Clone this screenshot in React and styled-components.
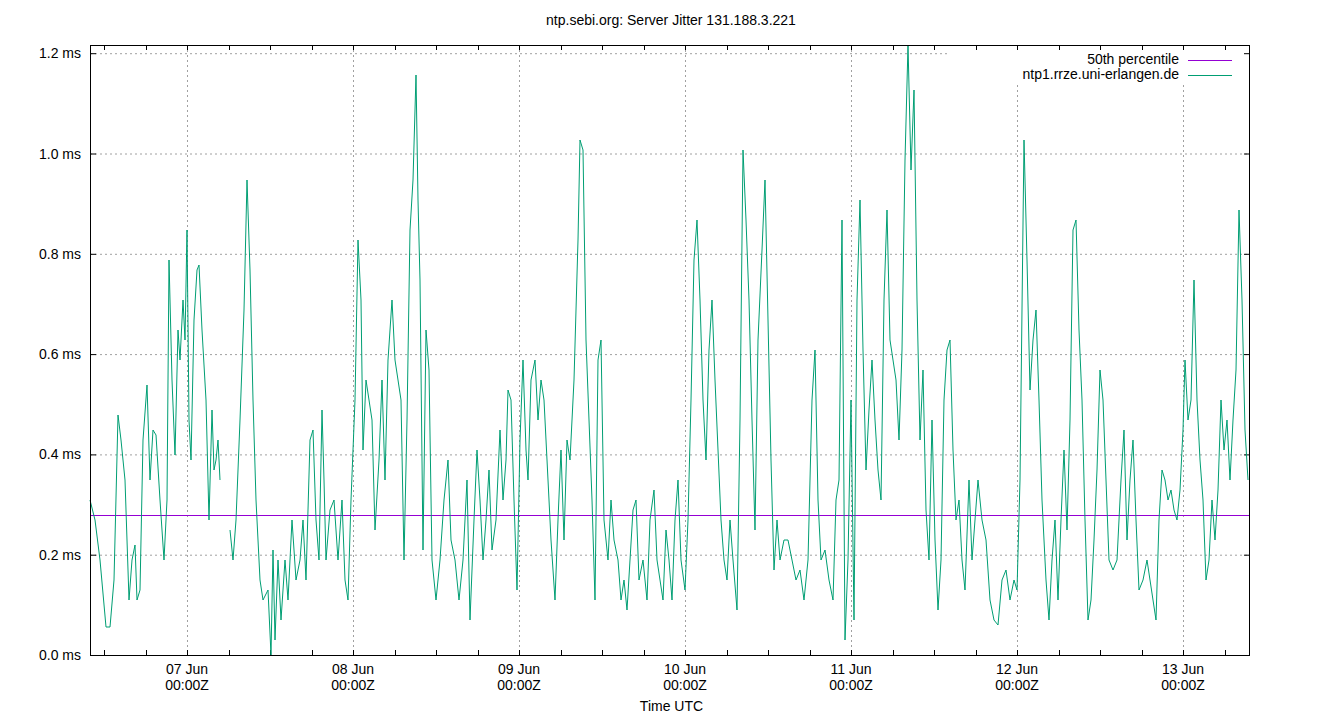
import React from 'react';
import styled, { createGlobalStyle } from 'styled-components';

const GlobalStyle = createGlobalStyle`
  html, body { margin: 0; padding: 0; background: #fff; }
  body { font-family: "Liberation Sans", Arial, sans-serif; }
`;

const Page = styled.div`
  width: 1340px;
  height: 720px;
  display: flex;
  flex-direction: column;
  align-items: center;
  color: #000;
`;

const Title = styled.div`
  height: 30px;
  line-height: 40px;
  font-size: 14px;
  padding-left: 2px;
`;

const Chart = styled.svg`
  display: block;
  font-family: "Liberation Sans", Arial, sans-serif;
  font-size: 14px;
`;

const XLabel = styled.div`
  font-size: 14px;
  line-height: 22px;
  padding-left: 3px;
`;

const L = 90, R = 1250, T = 45, B = 655;
const PX_PER_MS = 501.5;
const yOf = (ms) => B - ms * PX_PER_MS;
const day0 = 187, dayW = 166;

const pts = `90 500 95 520 100 560 106 627 110 627 114 580 118 415 121 440 125 480 129 600 132 560 135 545 137 600 140 590 143 440 147 385 150 480 153 430 156 435 160 500 164 560 167 500 169 260 172 380 175 455 178 330 180 360 183 300 185 340 187 230 189 420 191 460 194 320 197 270 199 265 202 330 206 400 209 520 212 410 214 470 216 460 218 440 220 480 230 530 233 560 236 520 240 420 244 310 247 180 250 270 253 400 256 500 260 580 263 600 268 590 271 655 273 550 275 640 278 560 281 620 285 560 288 600 292 520 296 580 300 560 303 520 306 580 310 440 313 430 316 520 319 560 322 410 324 480 326 560 330 510 334 500 338 560 342 500 345 580 348 600 351 500 355 400 358 240 361 300 363 450 366 380 369 400 372 420 375 530 379 460 382 380 385 480 388 360 392 300 395 360 398 380 401 400 404 560 407 420 410 230 413 180 416 75 418 200 420 280 423 550 426 330 429 370 432 560 436 600 440 560 444 500 448 460 451 540 455 560 459 600 463 560 467 480 470 620 474 520 477 450 480 500 483 560 486 520 489 470 492 550 496 520 500 430 503 500 506 460 508 390 511 400 514 500 517 590 520 440 523 360 526 450 528 480 531 380 535 360 538 420 541 380 544 400 548 480 551 540 555 600 558 520 561 450 564 540 567 440 570 460 574 380 578 240 580 140 583 150 586 340 589 420 592 500 595 600 598 360 601 340 604 520 608 560 611 500 614 540 618 560 621 600 624 580 627 610 630 560 633 510 636 500 639 580 643 560 647 600 650 520 654 490 657 560 660 580 663 600 666 530 669 560 672 600 675 520 678 480 681 560 685 590 688 520 691 400 694 260 697 220 700 300 703 400 706 460 709 350 712 300 715 380 718 450 721 520 724 560 727 580 730 520 733 560 737 610 740 420 743 150 746 220 749 300 752 420 755 530 758 340 762 250 765 180 768 320 771 460 774 570 777 520 780 560 784 540 788 540 792 560 796 580 800 570 804 600 808 560 812 400 815 350 818 500 821 560 825 550 829 580 833 600 836 500 839 480 842 220 845 640 848 560 851 400 854 620 857 300 860 200 863 350 866 470 869 410 872 360 875 420 878 470 881 500 884 300 887 210 890 340 893 360 896 380 899 440 902 350 905 160 908 45 911 170 914 90 917 300 920 440 923 370 926 510 929 560 932 420 935 540 938 610 941 560 944 400 947 350 950 340 953 450 956 520 959 500 962 560 965 590 969 480 972 560 975 520 978 480 982 520 986 540 990 600 994 620 998 625 1002 580 1006 570 1010 600 1014 580 1017 590 1020 480 1024 140 1027 260 1030 390 1033 340 1036 310 1039 400 1042 500 1046 580 1049 620 1052 560 1055 520 1058 600 1061 520 1064 450 1067 530 1070 420 1073 230 1076 220 1079 330 1082 400 1085 520 1088 620 1091 600 1094 540 1097 470 1100 370 1103 400 1106 480 1109 560 1113 570 1117 560 1121 480 1124 430 1127 540 1130 480 1133 440 1136 520 1139 590 1143 580 1147 560 1150 580 1153 600 1156 620 1159 520 1162 470 1165 480 1168 500 1171 490 1174 510 1177 520 1180 490 1183 430 1185 360 1188 420 1191 400 1194 280 1197 400 1200 460 1203 500 1206 580 1209 560 1212 500 1215 540 1218 490 1221 400 1224 450 1227 420 1230 480 1233 420 1236 370 1239 210 1242 300 1245 430 1248 480`
  .split(' ').map(Number);

// split into two segments (gap near x=221..230)
const seg = [[], []];
for (let i = 0; i < pts.length; i += 2) {
  seg[pts[i] <= 220 ? 0 : 1].push(`${pts[i]},${pts[i + 1]}`);
}

const days = ['07', '08', '09', '10', '11', '12', '13'];
const yVals = [0, 0.2, 0.4, 0.6, 0.8, 1.0, 1.2];

export default function App() {
  const minor = [];
  for (let x = day0 - 2 * dayW / 4; x < R; x += dayW / 4) if (x > L) minor.push(x);

  return (
    <Page>
      <GlobalStyle />
      <Title>ntp.sebi.org: Server Jitter 131.188.3.221</Title>
      <Chart width="1340" height="665" viewBox="0 30 1340 665">
        {/* grid */}
        <g stroke="#a0a0a0" strokeWidth="1" strokeDasharray="2,3">
          {yVals.slice(1).map((v) => (
            <line key={v} x1={L} x2={v === 1.2 ? 950 : R} y1={yOf(v) + 0.5} y2={yOf(v) + 0.5} />
          ))}
          {days.map((d, i) => (
            <line key={d} x1={day0 + i * dayW + 0.5} x2={day0 + i * dayW + 0.5} y1={i >= 5 ? 85 : T} y2={B} />
          ))}
        </g>
        {/* ticks */}
        <g stroke="#000" strokeWidth="1">
          {minor.map((x) => (
            <g key={x}>
              <line x1={Math.round(x) + 0.5} x2={Math.round(x) + 0.5} y1={B} y2={B - 5} />
              <line x1={Math.round(x) + 0.5} x2={Math.round(x) + 0.5} y1={T} y2={T + 5} />
            </g>
          ))}
          {yVals.map((v) => (
            <g key={v}>
              <line x1={L} x2={L + 6} y1={yOf(v) + 0.5} y2={yOf(v) + 0.5} />
              <line x1={R - 6} x2={R} y1={yOf(v) + 0.5} y2={yOf(v) + 0.5} />
            </g>
          ))}
        </g>
        {/* labels */}
        {yVals.map((v) => (
          <text key={v} x="81" y={yOf(v) + 5} textAnchor="end">{v.toFixed(1)} ms</text>
        ))}
        {days.map((d, i) => (
          <text key={d} x={day0 + i * dayW} y="674" textAnchor="middle">
            <tspan x={day0 + i * dayW}>{d} Jun</tspan>
            <tspan x={day0 + i * dayW} dy="16">00:00Z</tspan>
          </text>
        ))}
        {/* data */}
        <line x1={L} x2={R} y1="515.5" y2="515.5" stroke="#9400d3" strokeWidth="1" />
        {seg.map((s, i) => (
          <polyline key={i} points={s.join(' ')} fill="none" stroke="#009e73" strokeWidth="1" />
        ))}
        {/* legend */}
        <text x="1179" y="64" textAnchor="end">50th percentile</text>
        <line x1="1188" x2="1232" y1="60.5" y2="60.5" stroke="#9400d3" />
        <text x="1179" y="79" textAnchor="end">ntp1.rrze.uni-erlangen.de</text>
        <line x1="1188" x2="1232" y1="75.5" y2="75.5" stroke="#009e73" />
        {/* border */}
        <rect x={L + 0.5} y={T + 0.5} width={R - L - 1} height={B - T} fill="none" stroke="#000" />
      </Chart>
      <XLabel>Time UTC</XLabel>
    </Page>
  );
}
